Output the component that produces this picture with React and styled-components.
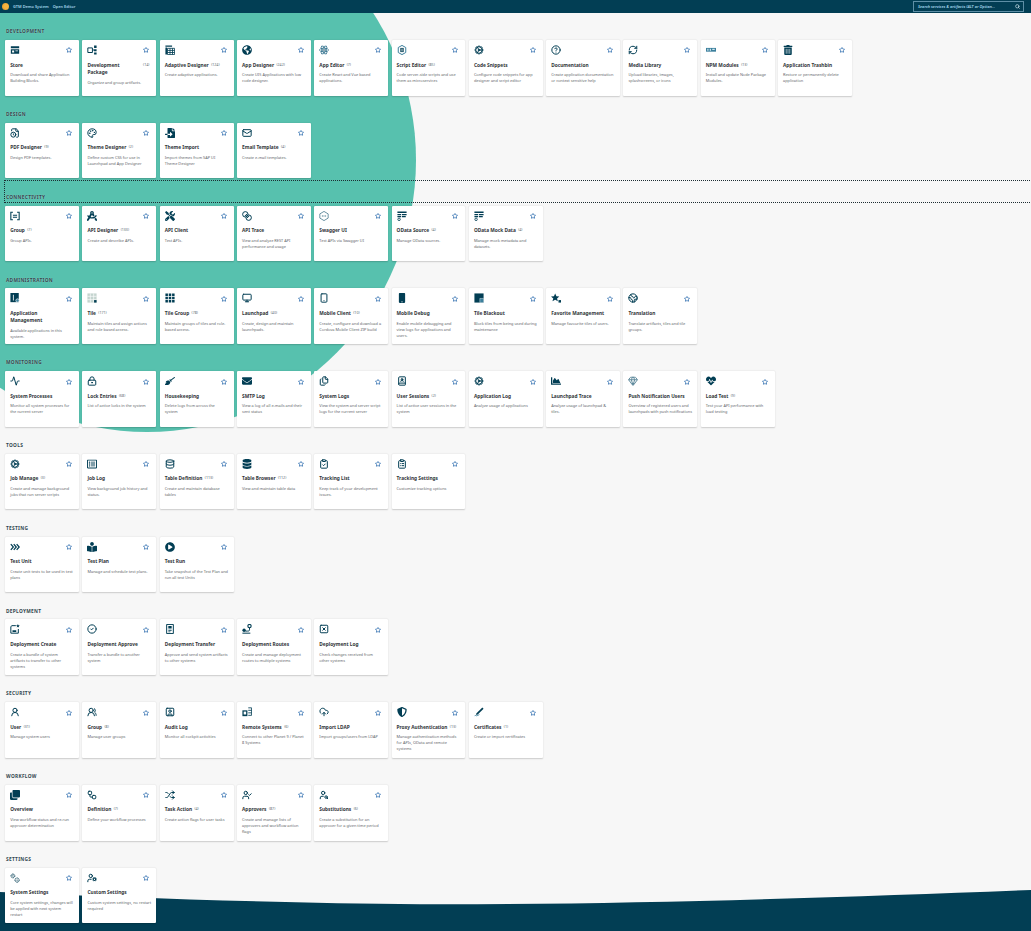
import styled, { createGlobalStyle } from "styled-components";
import {
  Cog, CircleHelp, RefreshCw, FileClock, Palette, Mail, Monitor, Smartphone, Earth,
  Activity, LockKeyhole, Files, BookUser, Gem, Database, ClipboardCheck, ClipboardList,
  CircleCheck, SquareX, UserRound, UsersRound, SquareUser, CloudUpload,
  Workflow, Shuffle, UserCheck, UserSearch, UserCog, Star, Search,
} from "lucide-react";
import {
  FaGlobeAmericas, FaTrashAlt, FaFileImport, FaDraftingCompass, FaTools, FaMobile, FaBroom, FaEnvelope,
  FaChartArea, FaHeartbeat, FaRegListAlt, FaDatabase, FaBookReader, FaPlayCircle, FaShieldAlt, FaClone,
} from "react-icons/fa";

const Glyph = ({ children }) => (
  <svg viewBox="0 0 24 24" width="10" height="10" fill="currentColor">{children}</svg>
);

const StoreIcon = () => (
  <Glyph>
    <path d="M2 3h20v5H2zM2 10h20v11H2z" />
    <path d="M5 13h5v5H5zM13 13h6v2h-6z" fill="#fff" />
  </Glyph>
);
const PackageIcon = () => (
  <Glyph>
    <path d="M2 7h11v11H2z" fill="none" stroke="currentColor" strokeWidth="2.4" />
    <path d="M17 1h6v6h-6zM17 10h6v5h-6zM17 18h6v5h-6zM13 11h4v2h-4z" />
  </Glyph>
);
const TableIcon = () => (
  <Glyph>
    <path d="M1 1h16v3H1zM1 6h4v17H1z" />
    <path d="M6 8h17v15H6zM6 13h17M6 18h17M12 8v15M18 8v15" fill="none" stroke="currentColor" strokeWidth="2" />
  </Glyph>
);
const AtomIcon = () => (
  <Glyph>
    <g fill="none" stroke="#2f6f8c" strokeWidth="1.8">
      <ellipse cx="12" cy="12" rx="11" ry="4.5" />
      <ellipse cx="12" cy="12" rx="11" ry="4.5" transform="rotate(60 12 12)" />
      <ellipse cx="12" cy="12" rx="11" ry="4.5" transform="rotate(120 12 12)" />
    </g>
    <circle cx="12" cy="12" r="2" />
  </Glyph>
);
const ScriptIcon = () => (
  <Glyph>
    <path d="M12 1l9 5v12l-9 5-9-5V6z" fill="none" stroke="#3b7f9c" strokeWidth="2.4" />
    <path d="M8 7h8v10H8z" />
    <path d="M10 9h4v2h-4zM10 13h4v2h-4z" fill="#fff" />
  </Glyph>
);
const NpmIcon = () => (
  <Glyph>
    <path d="M0 7h24v9H0z" fill="#3b7f9c" />
    <path d="M3 9h3v5H3zM9 9h3v5H9zM15 9h6v3h-6z" fill="#cfe6ef" />
  </Glyph>
);
const BracketIcon = () => (
  <Glyph>
    <path d="M7 3H2v18h5M17 3h5v18h-5" fill="none" stroke="currentColor" strokeWidth="2.6" />
    <path d="M7 9h10v2.500H7zM7 13.500h10V16H7z" />
  </Glyph>
);
const ChainIcon = () => (
  <Glyph>
    <g fill="none" stroke="currentColor" strokeWidth="2.4">
      <circle cx="8" cy="8" r="6.500" />
      <circle cx="16" cy="16" r="6.500" />
      <path d="M7 12l5-5M12 17l5-5" />
    </g>
  </Glyph>
);
const SwaggerIcon = () => (
  <Glyph>
    <path d="M12 1l10 6v10l-10 6-10-6V7z" fill="none" stroke="#5f8a9c" strokeWidth="2.2" />
    <path d="M7 10h2v4H7zM11 10h2v4h-2zM15 10h2v4h-2z" fill="#5f8a9c" />
  </Glyph>
);
const ODataIcon = () => (
  <Glyph>
    <path d="M1 1h22v4H1zM1 7h9v3H1zM12 7h11v3H12zM1 12h9v3H1zM12 12h9v3h-9z" />
    <circle cx="5" cy="20" r="3" fill="none" stroke="currentColor" strokeWidth="2" />
  </Glyph>
);
const AppMgmtIcon = () => (
  <Glyph>
    <path d="M1 0h20v22H1z" />
    <path d="M7 4h2v14H7z" fill="#fff" />
    <circle cx="18" cy="18" r="4" fill="#3b7f9c" stroke="#fff" strokeWidth="1.500" />
  </Glyph>
);
const TileIcon = () => (
  <Glyph>
    <path d="M1 1h22v22H1z" fill="#c4d4cf" />
    <path d="M8 1v22M16 1v22M1 8h22M1 16h22" stroke="#fff" strokeWidth="1.500" />
    <path d="M17 17h6v6h-6z" />
  </Glyph>
);
const TileGroupIcon = () => (
  <Glyph>
    <path d="M1 1h6v6H1zM9 1h6v6H9zM17 1h6v6h-6zM1 9h6v6H1zM9 9h6v6H9zM17 9h6v6h-6zM1 17h6v6H1zM9 17h6v6H9zM17 17h6v6h-6z" />
  </Glyph>
);
const BlackoutIcon = () => (
  <Glyph>
    <path d="M1 1h22v22H1z" />
    <path d="M14 13h9v10h-9z" fill="#3b7f9c" stroke="#fff" />
  </Glyph>
);
const FavoriteIcon = () => (
  <Glyph>
    <path d="M10 1l3 7 7 .5-5.500 4.500 2 7L10 16l-6.500 4 2-7L0 8.500 7 8z" />
    <path d="M18 17h6v6h-6z" />
  </Glyph>
);
const UnitIcon = () => (
  <Glyph>
    <path d="M2 5l6 7-6 7M9 5l6 7-6 7M16 5l6 7-6 7" fill="none" stroke="currentColor" strokeWidth="3" />
  </Glyph>
);
const CreateIcon = () => (
  <Glyph>
    <path d="M14 4H4l-2 3v15h18V12" fill="none" stroke="currentColor" strokeWidth="2.4" />
    <path d="M6 15h9v4H6zM19 0l1.300 3 3.200.3-2.400 2.100.7 3.100-2.800-1.700-2.800 1.700.7-3.100-2.400-2.100 3.200-.3z" />
  </Glyph>
);
const TransferIcon = () => (
  <Glyph>
    <path d="M4 1h16v22H4z" fill="none" stroke="currentColor" strokeWidth="2.400" />
    <path d="M8 5h8v6H8zM8 14h8v2H8zM8 18h5v2H8z" />
  </Glyph>
);
const RoutesIcon = () => (
  <Glyph>
    <circle cx="18" cy="5" r="4" fill="none" stroke="currentColor" strokeWidth="2.6" />
    <circle cx="5" cy="15" r="4" />
    <path d="M18 9v5c0 3-3 3-5 3H8M1 22h19" fill="none" stroke="currentColor" strokeWidth="2.400" />
  </Glyph>
);
const RemoteIcon = () => (
  <Glyph>
    <path d="M1 8h12v14H1z" />
    <path d="M4 11h6v7H4z" fill="#fff" />
    <path d="M15 2h8v18h-8M15 8h8M15 14h8" fill="none" stroke="currentColor" strokeWidth="2" />
  </Glyph>
);
const CertificateIcon = () => (
  <Glyph>
    <path d="M20 1l3 3L9 18l-4 1 1-4z" />
    <path d="M1 22c2-3 3-1 5-1s4-1 7-3" fill="none" stroke="#3b7f9c" strokeWidth="2" />
  </Glyph>
);
const SystemSettingsIcon = () => (
  <Glyph>
    <g fill="none" stroke="currentColor" strokeWidth="2.4">
      <circle cx="7" cy="7" r="4.500" strokeDasharray="3 1" />
      <circle cx="17" cy="17" r="5" strokeDasharray="3 1" />
    </g>
    <circle cx="7" cy="7" r="1.500" />
    <circle cx="17" cy="17" r="1.500" />
  </Glyph>
);

const sections = [
  { name: "Development", items: [
    { icon: StoreIcon, title: "Store", desc: "Download and share Application Building Blocks." },
    { icon: PackageIcon, title: "Development\nPackage", stacked: true, count: 14, desc: "Organize and group artifacts." },
    { icon: TableIcon, title: "Adaptive Designer", count: 124, desc: "Create adaptive applications." },
    { icon: FaGlobeAmericas, title: "App Designer", count: 242, desc: "Create UI5 Applications with low code designer." },
    { icon: AtomIcon, title: "App Editor", count: 7, desc: "Create React and Vue based applications." },
    { icon: ScriptIcon, title: "Script Editor", count: 85, desc: "Code server-side scripts and use them as microservices" },
    { icon: Cog, title: "Code Snippets", desc: "Configure code snippets for app designer and script editor" },
    { icon: CircleHelp, title: "Documentation", desc: "Create application documentation or context sensitive help" },
    { icon: RefreshCw, title: "Media Library", desc: "Upload libraries, images, splashscreens, or icons" },
    { icon: NpmIcon, title: "NPM Modules", count: 13, desc: "Install and update Node Package Modules." },
    { icon: FaTrashAlt, title: "Application Trashbin", desc: "Restore or permanently delete application" },
  ] },
  { name: "Design", items: [
    { icon: FileClock, title: "PDF Designer", count: 9, desc: "Design PDF templates." },
    { icon: Palette, title: "Theme Designer", count: 2, desc: "Define custom CSS for use in Launchpad and App Designer" },
    { icon: FaFileImport, title: "Theme Import", desc: "Import themes from SAP UI Theme Designer" },
    { icon: Mail, title: "Email Template", count: 4, desc: "Create e-mail templates." },
  ] },
  { name: "Connectivity", focused: true, items: [
    { icon: BracketIcon, title: "Group", count: 7, desc: "Group APIs." },
    { icon: FaDraftingCompass, title: "API Designer", count: 133, desc: "Create and describe APIs." },
    { icon: FaTools, title: "API Client", desc: "Test APIs." },
    { icon: ChainIcon, title: "API Trace", desc: "View and analyze REST API performance and usage" },
    { icon: SwaggerIcon, title: "Swagger UI", desc: "Test APIs via Swagger UI" },
    { icon: ODataIcon, title: "OData Source", count: 4, desc: "Manage OData sources." },
    { icon: ODataIcon, title: "OData Mock Data", count: 4, desc: "Manage mock metadata and datasets." },
  ] },
  { name: "Administration", items: [
    { icon: AppMgmtIcon, title: "Application\nManagement", stacked: true, desc: "Available applications in this system." },
    { icon: TileIcon, title: "Tile", count: 171, desc: "Maintain tiles and assign actions and role based access." },
    { icon: TileGroupIcon, title: "Tile Group", count: 78, desc: "Maintain groups of tiles and role-based access." },
    { icon: Monitor, title: "Launchpad", count: 40, desc: "Create, design and maintain launchpads." },
    { icon: Smartphone, title: "Mobile Client", count: 10, desc: "Create, configure and download a Cordova Mobile Client ZIP build" },
    { icon: FaMobile, title: "Mobile Debug", desc: "Enable mobile debugging and view logs for applications and users." },
    { icon: BlackoutIcon, title: "Tile Blackout", desc: "Block tiles from being used during maintenance" },
    { icon: FavoriteIcon, title: "Favorite Management", desc: "Manage favourite tiles of users." },
    { icon: Earth, title: "Translation", desc: "Translate artifacts, tiles and tile groups." },
  ] },
  { name: "Monitoring", items: [
    { icon: Activity, title: "System Processes", desc: "Monitor all system processes for the current server" },
    { icon: LockKeyhole, title: "Lock Entries", count: 68, desc: "List of active locks in the system" },
    { icon: FaBroom, title: "Housekeeping", desc: "Delete logs from across the system" },
    { icon: FaEnvelope, title: "SMTP Log", desc: "View a log of all e-mails and their sent status" },
    { icon: Files, title: "System Logs", desc: "View the system and server script logs for the current server" },
    { icon: BookUser, title: "User Sessions", count: 2, desc: "List of active user sessions in the system" },
    { icon: Cog, title: "Application Log", desc: "Analyze usage of applications" },
    { icon: FaChartArea, title: "Launchpad Trace", desc: "Analyze usage of launchpad &\ntiles." },
    { icon: Gem, muted: true, title: "Push Notification Users", desc: "Overview of registered users and launchpads with push notifications" },
    { icon: FaHeartbeat, title: "Load Test", count: 9, desc: "Test your API performance with load testing" },
  ] },
  { name: "Tools", items: [
    { icon: Cog, title: "Job Manage", count: 3, desc: "Create and manage background jobs that run server scripts" },
    { icon: FaRegListAlt, title: "Job Log", desc: "View background job history and status." },
    { icon: Database, title: "Table Definition", count: 113, desc: "Create and maintain database tables" },
    { icon: FaDatabase, title: "Table Browser", count: 112, desc: "View and maintain table data" },
    { icon: ClipboardCheck, title: "Tracking List", desc: "Keep track of your development issues." },
    { icon: ClipboardList, title: "Tracking Settings", desc: "Customize tracking options" },
  ] },
  { name: "Testing", items: [
    { icon: UnitIcon, title: "Test Unit", desc: "Create unit tests to be used in test plans" },
    { icon: FaBookReader, title: "Test Plan", desc: "Manage and schedule test plans." },
    { icon: FaPlayCircle, title: "Test Run", desc: "Take snapshot of the Test Plan and run all test Units" },
  ] },
  { name: "Deployment", items: [
    { icon: CreateIcon, title: "Deployment Create", desc: "Create a bundle of system\nartifacts to transfer to other systems" },
    { icon: CircleCheck, title: "Deployment Approve", desc: "Transfer a bundle to another system" },
    { icon: TransferIcon, title: "Deployment Transfer", desc: "Approve and send system artifacts to other systems" },
    { icon: RoutesIcon, title: "Deployment Routes", desc: "Create and manage deployment routes to multiple systems" },
    { icon: SquareX, title: "Deployment Log", desc: "Check changes received from other systems" },
  ] },
  { name: "Security", items: [
    { icon: UserRound, title: "User", count: 31, desc: "Manage system users" },
    { icon: UsersRound, title: "Group", count: 8, desc: "Manage user groups" },
    { icon: SquareUser, title: "Audit Log", desc: "Monitor all cockpit activities" },
    { icon: RemoteIcon, title: "Remote Systems", count: 6, desc: "Connect to other Planet 9 / Planet 8 Systems" },
    { icon: CloudUpload, title: "Import LDAP", desc: "Import groups/users from LDAP" },
    { icon: FaShieldAlt, title: "Proxy Authentication", count: 13, desc: "Manage authentication methods for APIs, OData and remote systems" },
    { icon: CertificateIcon, title: "Certificates", count: 1, desc: "Create or import certificates" },
  ] },
  { name: "Workflow", items: [
    { icon: FaClone, title: "Overview", desc: "View workflow status and re-run approver determination" },
    { icon: Workflow, title: "Definition", count: 7, desc: "Define your workflow processes" },
    { icon: Shuffle, title: "Task Action", count: 4, desc: "Create action flags for user tasks" },
    { icon: UserCheck, title: "Approvers", count: 87, desc: "Create and manage lists of approvers and workflow action flags" },
    { icon: UserSearch, title: "Substitutions", count: 6, desc: "Create a substitution for an approver for a given time period" },
  ] },
  { name: "Settings", items: [
    { icon: SystemSettingsIcon, title: "System Settings", desc: "Core system settings, changes will be applied with next system restart" },
    { icon: UserCog, title: "Custom Settings", desc: "Custom system settings, no restart required" },
  ] },
];

function Tile({ item }) {
  const Icon = item.icon;
  return (
    <Card>
      <CardTop>
        <IconBox $muted={item.muted}><Icon size={10} /></IconBox>
        <FavStar><Star size={6} /></FavStar>
      </CardTop>
      <TitleRow>
        <CardTitle $stacked={item.stacked}>{item.title}</CardTitle>
        {item.count && <Count>({item.count})</Count>}
      </TitleRow>
      <CardDesc>{item.desc}</CardDesc>
    </Card>
  );
}

export default function App() {
  return (
    <Page>
      <GlobalStyle />
      <TealBlob />
      <BottomWave viewBox="0 889 1031 42" preserveAspectRatio="none">
        <path d="M0 892C130 898 280 903 420 904.300C620 905 850 897 1031 890V931H0Z" fill="#023e54" />
      </BottomWave>
      <Header>
        <Logo />
        <SystemName>GTM Demo System</SystemName>
        <SystemName>Open Editor</SystemName>
        <SearchBox>
          <SearchHint>Search services &amp; artifacts (ALT or Option...</SearchHint>
          <Search size={5} color="#d9eef6" strokeWidth={3} />
        </SearchBox>
      </Header>
      <Main>
        {sections.map((section) => (
          <Section key={section.name}>
            <SectionHeading $focused={section.focused}>{section.name}</SectionHeading>
            <TileGrid>
              {section.items.map((item) => <Tile key={item.title} item={item} />)}
            </TileGrid>
          </Section>
        ))}
      </Main>
    </Page>
  );
}

const GlobalStyle = createGlobalStyle`
  body {
    margin: 0;
    background: #f7f7f7;
    font-family: "Noto Sans", "Open Sans", sans-serif;
  }
`;

const Page = styled.div`
  position: relative;
  height: 931px;
  overflow: hidden;
  background: #f7f7f7;
`;

const TealBlob = styled.div`
  position: absolute;
  left: -122px;
  top: -112px;
  width: 538px;
  height: 544px;
  border-radius: 50%;
  background: #57c1ae;
`;

const BottomWave = styled.svg`
  position: absolute;
  left: 0;
  bottom: 0;
  width: 100%;
  height: 42px;
`;

const Header = styled.header`
  position: relative;
  display: flex;
  align-items: center;
  gap: 4px;
  height: 13px;
  padding: 0 7px 0 2px;
  background: #023e54;
`;

const Logo = styled.span`
  width: 7px;
  height: 7px;
  border-radius: 50%;
  background: radial-gradient(circle at 60% 50%, #f6b23f 40%, #d98a20 100%);
`;

const SystemName = styled.span`
  font-size: 3.9px;
  font-weight: 600;
  color: #a6d8ec;
`;

const SearchBox = styled.div`
  display: flex;
  align-items: center;
  justify-content: space-between;
  box-sizing: border-box;
  width: 111px;
  height: 11px;
  margin-left: auto;
  padding: 0 3px 0 4px;
  border: 1px solid #5e8fa6;
`;

const SearchHint = styled.span`
  font-size: 3.9px;
  font-style: italic;
  font-weight: 600;
  color: #a6d8ec;
`;

const Main = styled.main`
  position: relative;
  padding: 2.7px 0 0 5.2px;
`;

const Section = styled.section`
  margin-bottom: 2.8px;
`;

const SectionHeading = styled.h2`
  display: flex;
  align-items: flex-end;
  box-sizing: border-box;
  width: ${(p) => (p.$focused ? "1100px" : "auto")};
  height: 20.6px;
  margin: 0 0 3.7px;
  padding: 0 0 2px 0.8px;
  font-size: 4.8px;
  font-weight: 700;
  line-height: 6px;
  letter-spacing: 0.3px;
  text-transform: uppercase;
  color: #32474f;
  text-shadow: 0 0 1px rgba(255, 255, 255, 0.5);
  outline: ${(p) => (p.$focused ? "1px dotted #1d2d33" : "none")};
  outline-offset: -0.5px;
`;

const TileGrid = styled.div`
  display: flex;
  gap: 3.4px;
`;

const Card = styled.article`
  box-sizing: border-box;
  width: 73.9px;
  height: 55.7px;
  padding: 5px 5px 0;
  border-radius: 1px;
  background: #fff;
  box-shadow: 0 0.5px 1.5px rgba(0, 0, 0, 0.18);
`;

const CardTop = styled.div`
  display: flex;
  justify-content: space-between;
  height: 10.4px;
`;

const IconBox = styled.span`
  display: block;
  width: 10px;
  height: 10px;
  color: ${(p) => (p.$muted ? "#5f8a9c" : "#023e54")};

  svg {
    display: block;
  }

  svg.lucide {
    stroke-width: 2.4;
  }
`;

const FavStar = styled.span`
  display: block;
  margin: 2.5px 2px 0 0;
  color: #0854a0;

  svg {
    display: block;
    stroke-width: 2.6;
  }
`;

const TitleRow = styled.div`
  display: flex;
  align-items: flex-start;
  margin-top: 6.2px;
  padding-right: 2px;
`;

const CardTitle = styled.h3`
  flex: ${(p) => (p.$stacked ? "1" : "0 1 auto")};
  margin: 0;
  font-size: 4.8px;
  font-weight: 700;
  line-height: 7.3px;
  color: #32363a;
  white-space: pre-line;
`;

const Count = styled.span`
  flex: none;
  margin-left: 2.4px;
  font-size: 3.6px;
  line-height: 6px;
  color: #5a6a72;
`;

const CardDesc = styled.p`
  margin: 3.4px 0 0;
  font-size: 3.9px;
  line-height: 6px;
  color: #5f666b;
  white-space: pre-line;
`;
